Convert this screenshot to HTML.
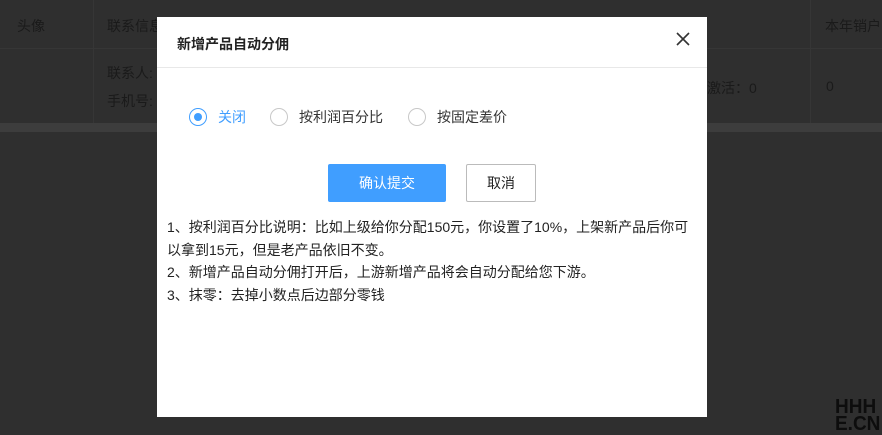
<!DOCTYPE html>
<html><head><meta charset="utf-8"><style>
*{margin:0;padding:0;box-sizing:border-box}
body{width:882px;height:435px;overflow:hidden;background:#2f2f2f;font-family:"Liberation Sans","Noto Sans CJK SC",sans-serif;position:relative;color:#111}
.t{position:absolute;font-size:14px;color:#1a1a1a;white-space:nowrap}
.bg{position:absolute;left:0;top:0;width:882px;height:435px}
.dlg{position:absolute;left:157px;top:17px;width:550px;height:400px;background:#fff}
.hd{height:51px;border-bottom:1px solid #e8e8e8;padding:17px 0 0 20px;font-size:14px;font-weight:bold;color:#222}
.x{position:absolute;right:17px;top:15px;width:14px;height:14px}
.r{position:absolute;top:90px;font-size:14px;display:flex;align-items:center;color:#333}
.c{width:18px;height:18px;border:1px solid #c8c8c8;border-radius:50%;margin-right:11px;position:relative}
.c.on{border-color:#409eff}
.c.on:after{content:"";position:absolute;left:4px;top:4px;width:8px;height:8px;border-radius:50%;background:#409eff}
.b1{position:absolute;left:171px;top:147px;width:118px;height:38px;background:#409eff;color:#fff;font-size:14px;text-align:center;line-height:38px;border-radius:2px}
.b2{position:absolute;left:309px;top:147px;width:70px;height:38px;border:1px solid #bbb;color:#222;font-size:14px;text-align:center;line-height:36px;border-radius:2px}
.tx{position:absolute;left:10px;top:199px;font-size:14px;line-height:22.7px;color:#222;width:530px}
</style></head><body>
<div class="bg">
<div style="position:absolute;left:0;top:48px;width:882px;height:1px;background:#363636"></div>
<div style="position:absolute;left:0;top:123px;width:882px;height:9px;background:#3d3d3d"></div>
<div style="position:absolute;left:93px;top:0;width:1px;height:123px;background:#363636"></div>
<div style="position:absolute;left:810px;top:0;width:1px;height:123px;background:#363636"></div>
<div class="t" style="left:17px;top:16px">头像</div>
<div class="t" style="left:107px;top:16px">联系信息</div>
<div class="t" style="left:825px;top:16px">本年销户</div>
<div class="t" style="left:107px;top:63px">联系人:</div>
<div class="t" style="left:107px;top:91px">手机号:</div>
<div class="t" style="left:707px;top:78px">激活：0</div>
<div class="t" style="left:826px;top:78px">0</div>
<div style="position:absolute;left:835px;top:399px;font:bold 20px/17px 'Liberation Sans',sans-serif;color:#0d0d0d;letter-spacing:0px;transform:scaleX(0.95);transform-origin:left">HHH<br>E.CN</div>
</div>
<div class="dlg">
<div class="hd">新增产品自动分佣</div>
<svg class="x" viewBox="0 0 14 14"><path d="M1 1L13 13M13 1L1 13" stroke="#333" stroke-width="1.6"/></svg>
<div class="r" style="left:32px;color:#409eff"><span class="c on"></span>关闭</div>
<div class="r" style="left:113px"><span class="c"></span>按利润百分比</div>
<div class="r" style="left:251px"><span class="c"></span>按固定差价</div>
<div class="b1">确认提交</div>
<div class="b2">取消</div>
<div class="tx">1、按利润百分比说明：比如上级给你分配150元，你设置了10%，上架新产品后你可以拿到15元，但是老产品依旧不变。<br>2、新增产品自动分佣打开后，上游新增产品将会自动分配给您下游。<br>3、抹零：去掉小数点后边部分零钱</div>
</div>
</body></html>
